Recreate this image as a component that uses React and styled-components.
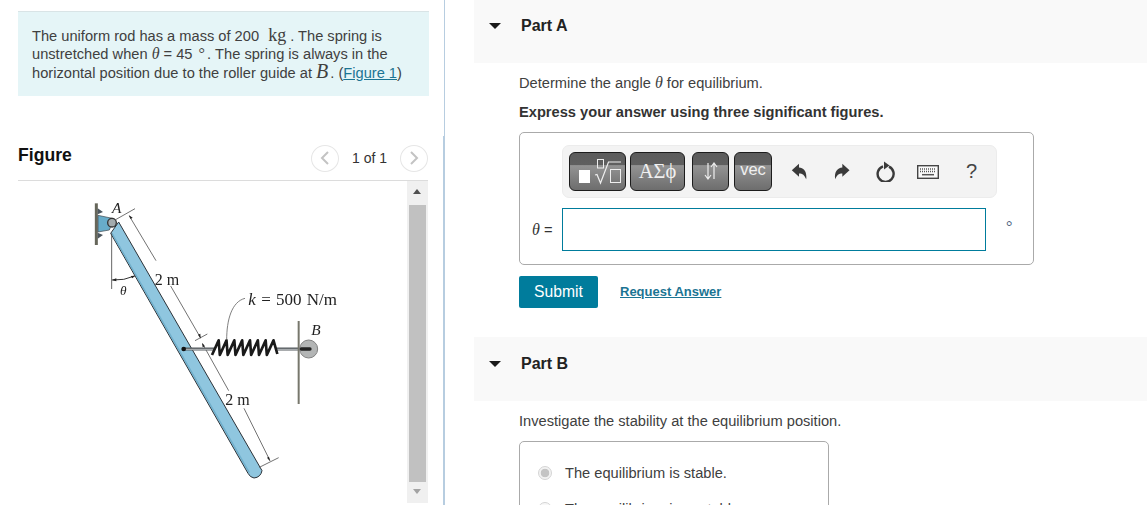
import styled, { createGlobalStyle } from 'styled-components';

const GlobalStyle = createGlobalStyle`
  html, body {
    margin: 0;
    padding: 0;
    height: 505px;
    overflow: hidden;
    background: #fff;
    font-family: "Liberation Sans", Arial, sans-serif;
    color: #333;
  }
`;

const coilPath = Array.from({ length: 8 })
  .map((_, i) => {
    const x = 402 + i * 23.5;
    return `${i === 0 ? 'M' : 'L'}${x - 6} 495L${x + 14} 451`;
  })
  .join('') + 'L592 492';

const RodFigure = () => (
  <FigureSvg viewBox="0 0 810 900">
    {/* wall bracket */}
    <path d="M49 40V165" stroke="#66665a" strokeWidth="9" />
    <path d="M53 55l16 11-16 7zM53 128l16 7-16 11z" fill="#4c565e" />
    <path d="M54 76L102 86 88 120 54 126z" fill="#68acc9" stroke="#3c444a" strokeWidth="2" />
    {/* rod */}
    <path d="M116 96L546 842Q542 862 522 864Q510 862 504 850L92 130z" fill="#8fc6df" stroke="#2c3238" strokeWidth="3" strokeLinejoin="round" />
    <path d="M96 130L508 848" stroke="#6fafcc" strokeWidth="4" />
    <circle cx="96" cy="98" r="13" fill="#a3abad" stroke="#333" strokeWidth="4" />
    {/* theta angle */}
    <path d="M95 130V297" stroke="#444" strokeWidth="2.5" fill="none" />
    <path d="M97 270Q132 272 164 258" stroke="#333" strokeWidth="3" fill="none" />
    <path d="M95 270l14-5v9zM166 257l-14 1 5 7z" fill="#222" />
    {/* dimension lines */}
    <g stroke="#555" strokeWidth="2.5" fill="none">
      <path d="M105 90L165 56" />
      <path d="M148 78L228 212M272 288L362 444" />
      <path d="M345 452L382 432" />
      <path d="M368 462L446 602M492 655L570 812" />
      <path d="M538 832L596 803" />
    </g>
    <path d="M146 75l12 8-6 4zM362 446l-8-12 7-3zM366 458l9 11-7 3zM570 814l-9-11 6-3z" fill="#222" />
    {/* spring */}
    <path d="M310 477H402M590 477H680" stroke="#555a5e" strokeWidth="9" />
    <path d="M310 478H402M590 478H680" stroke="#b8bcbe" strokeWidth="3" />
    <circle cx="311" cy="477" r="7" fill="#111" />
    <path d={coilPath} stroke="#1a1a1a" strokeWidth="8" fill="none" strokeLinejoin="round" />
    <path d="M495 325C455 335 440 390 440 450" stroke="#666" strokeWidth="2.5" fill="none" />
    {/* wall and roller at B */}
    <path d="M656 393V642" stroke="#77776c" strokeWidth="6" />
    <circle cx="686" cy="477" r="27" fill="#b3b5b5" stroke="#808080" strokeWidth="3" />
    <path d="M664 477H690" stroke="#222" strokeWidth="10" strokeLinecap="round" />
    <FigureLabel x="96" y="68" $size={46} $italic>A</FigureLabel>
    <FigureLabel x="224" y="284">2 m</FigureLabel>
    <FigureLabel x="120" y="316" $size={40} $italic>θ</FigureLabel>
    <FigureLabel x="505" y="344" $size={51} $wide><tspan fontStyle="italic">k</tspan> = 500 N/m</FigureLabel>
    <FigureLabel x="694" y="436" $size={46} $italic>B</FigureLabel>
    <FigureLabel x="436" y="644">2 m</FigureLabel>
  </FigureSvg>
);

const RootIcon = () => (
  <RootSvg width="42" height="32" viewBox="0 0 42 32" fill="none">
    <rect x="0" y="15" width="11" height="13" fill="#fff" />
    <rect x="18.5" y="4.5" width="6" height="8.5" stroke="#eee" />
    <path d="M16 20l2-.5L21.5 28 29.5 7H42" stroke="#eee" strokeWidth="1.2" />
    <rect x="31.5" y="14.5" width="10" height="13" stroke="#eee" />
  </RootSvg>
);

const ArrowsIcon = () => (
  <svg width="14" height="18" viewBox="0 0 14 18" fill="none" stroke="#eee" strokeWidth="1.2">
    <path d="M4 1V17M1 13l3 4 3-4" />
    <path d="M10 17V1M7 5l3-4 3 4" />
  </svg>
);

const UndoIcon = () => (
  <svg width="16" height="17" viewBox="33 38 48 52" fill="#3a3a3a">
    <path d="M35 60L57 40V52C72 53 82 65 79 88C74 75 68 70 57 70V80Z" />
  </svg>
);

const RedoIcon = () => (
  <svg width="16" height="17" viewBox="165 38 48 52" fill="#3a3a3a">
    <path d="M212 60L190 40V52C175 53 165 65 168 88C173 75 179 70 190 70V80Z" />
  </svg>
);

const ResetIcon = () => (
  <svg width="19" height="21" viewBox="0 0 19 21" fill="none">
    <path d="M7 5.3A8 8 0 1 0 13 5.6" stroke="#3a3a3a" strokeWidth="2.4" />
    <path d="M8 0.5L13.5 4.6 8 8.6z" fill="#3a3a3a" />
  </svg>
);

const KeyboardIcon = () => (
  <svg width="22" height="14" viewBox="0 0 22 14">
    <rect x="0.7" y="0.7" width="20.6" height="12.6" fill="#fafafa" stroke="#444" strokeWidth="1.4" />
    <path d="M3 4h16M3 6.5h16" stroke="#555" strokeWidth="1.4" strokeDasharray="1 1" />
    <path d="M5 9.7h12" stroke="#555" strokeWidth="1.5" />
  </svg>
);

const App = () => {
  return (
    <>
      <GlobalStyle />
      <Page>
        <LeftPanel>
          <Intro>
            The uniform rod has a mass of 200 <MathUnit>kg</MathUnit> . The spring is unstretched when{' '}
            <MathVar>θ</MathVar> = 45 <Degree>°</Degree>. The spring is always in the horizontal position due to
            the roller guide at <MathBig>B</MathBig>. (<FigureLink>Figure 1</FigureLink>)
          </Intro>
          <FigureHeader>
            <FigureTitle>Figure</FigureTitle>
            <Pager>
              <PagerButton>
                <svg width="10" height="14" viewBox="0 0 10 14" fill="none" stroke="#c3c3c3" strokeWidth="2"><path d="M8 1L2 7l6 6" /></svg>
              </PagerButton>
              <PagerText>1 of 1</PagerText>
              <PagerButton>
                <svg width="10" height="14" viewBox="0 0 10 14" fill="none" stroke="#c3c3c3" strokeWidth="2"><path d="M2 1l6 6-6 6" /></svg>
              </PagerButton>
            </Pager>
          </FigureHeader>
          <FigureRow>
            <FigureArea>
              <RodFigure />
            </FigureArea>
            <ScrollBar>
              <ScrollArrow $up />
              <ScrollThumb />
              <ScrollArrow />
            </ScrollBar>
          </FigureRow>
        </LeftPanel>
        <Divider />

        <RightPanel>
          <PartHeader>
            <Caret />
            <PartTitle>Part A</PartTitle>
          </PartHeader>
          <PartBody>
            <Question>Determine the angle <MathVar>θ</MathVar> for equilibrium.</Question>
            <Instruction>Express your answer using three significant figures.</Instruction>
            <AnswerBox>
              <Toolbar>
                <ToolButton $width={57} $gap={0} $icon><RootIcon /></ToolButton>
                <ToolButton $width={55} $gap={4} $serif>ΑΣϕ</ToolButton>
                <ToolButton $width={37} $gap={7} $icon><ArrowsIcon /></ToolButton>
                <ToolButton $width={38} $gap={5}>vec</ToolButton>
                <IconAction $left={19}><UndoIcon /></IconAction>
                <IconAction $left={27}><RedoIcon /></IconAction>
                <IconAction $left={26}><ResetIcon /></IconAction>
                <IconAction $left={22}><KeyboardIcon /></IconAction>
                <HelpMark>?</HelpMark>
              </Toolbar>
              <InputRow>
                <InputLabel><MathVar>θ</MathVar> =</InputLabel>
                <AnswerInput />
                <UnitMark>°</UnitMark>
              </InputRow>
            </AnswerBox>
            <Actions>
              <SubmitButton>Submit</SubmitButton>
              <RequestLink>Request Answer</RequestLink>
            </Actions>
          </PartBody>

          <PartHeader $second>
            <Caret />
            <PartTitle>Part B</PartTitle>
          </PartHeader>
          <PartBody>
            <StabilityText>Investigate the stability at the equilibrium position.</StabilityText>
            <ChoiceBox>
              <Choice>
                <Radio $checked />
                <span>The equilibrium is stable.</span>
              </Choice>
              <Choice>
                <Radio />
                <span>The equilibrium is unstable.</span>
              </Choice>
            </ChoiceBox>
          </PartBody>
        </RightPanel>
      </Page>
    </>
  );
};

export default App;

const Page = styled.div`
  display: flex;
  width: 1147px;
  height: 505px;
  overflow: hidden;
`;

const LeftPanel = styled.div`
  width: 411px;
  flex-shrink: 0;
  padding: 11px 14px 0 18px;
`;

const Divider = styled.div`
  width: 2px;
  flex-shrink: 0;
  background:
    linear-gradient(#b7cde0, #b7cde0) right top / 1px 100% no-repeat,
    linear-gradient(#b7cde0, #b7cde0) left 136px / 1px 100% no-repeat;
`;

const Intro = styled.div`
  padding: 15px 20px 0 14px;
  box-sizing: border-box;
  height: 85px;
  background: #e5f5f7;
  border-top: 1px solid #d9e4e6;
  line-height: 18.4px;
  font-size: 14.65px;
  color: #404040;
`;

const MathUnit = styled.span`
  font-family: "Liberation Serif", serif;
  font-size: 18px;
  line-height: 0;
  margin-left: 5px;
`;

const MathVar = styled.span`
  font-family: "Liberation Serif", serif;
  font-style: italic;
  font-size: 16px;
  line-height: 0;
`;

const MathBig = styled.span`
  font-family: "Liberation Serif", serif;
  font-style: italic;
  font-size: 20px;
  line-height: 0;
  margin-right: 2px;
`;

const Degree = styled.span`
  font-family: "Liberation Serif", serif;
  font-size: 16px;
  line-height: 0;
  margin: 0 2px 0 2px;
`;

const FigureLink = styled.span`
  color: #1b7493;
  text-decoration: underline;
`;

const FigureHeader = styled.div`
  display: flex;
  align-items: center;
  justify-content: space-between;
  height: 35px;
  margin: 49px 1px 0 0;
  border-bottom: 1px solid #dcdcdc;
`;

const FigureTitle = styled.div`
  font-size: 17.6px;
  font-weight: 700;
  color: #111;
  margin-top: -15px;
`;

const Pager = styled.div`
  display: flex;
  align-items: center;
  gap: 13px;
  margin-top: -9px;
`;

const PagerButton = styled.div`
  display: flex;
  align-items: center;
  justify-content: center;
  width: 28px;
  height: 27px;
  border: 1px solid #e6e6e6;
  border-radius: 50%;
  box-sizing: border-box;
  background: #fff;
`;

const PagerText = styled.div`
  font-size: 14px;
  color: #333;
`;

const FigureRow = styled.div`
  display: flex;
  height: 322px;
  margin-right: 1px;
`;

const FigureArea = styled.div`
  flex: 1;
  padding: 9px 0 0 62px;
`;

const FigureSvg = styled.svg`
  display: block;
  width: 270px;
  height: 300px;
  filter: blur(0.45px);
`;

const FigureLabel = styled.text`
  font-family: "Liberation Serif", serif;
  font-size: ${(p) => p.$size || 48}px;
  font-style: ${(p) => (p.$italic ? 'italic' : 'normal')};
  word-spacing: ${(p) => (p.$wide ? 3 : 0)}px;
  fill: #222;
`;

const ScrollBar = styled.div`
  display: flex;
  flex-direction: column;
  width: 21px;
  background: #f0f0f0;
`;

const ScrollArrow = styled.div`
  position: relative;
  height: ${(p) => (p.$up ? 24 : 21)}px;
  flex-shrink: 0;

  &::after {
    content: '';
    position: absolute;
    left: 6px;
    top: ${(p) => (p.$up ? 8 : 7)}px;
    border-left: 4.5px solid transparent;
    border-right: 4.5px solid transparent;
    ${(p) => (p.$up ? 'border-bottom: 5px solid #505050;' : 'border-top: 5px solid #a3a3a3;')}
  }
`;

const ScrollThumb = styled.div`
  flex: 1;
  margin: 0 2px;
  background: #c1c1c1;
`;

const RightPanel = styled.div`
  flex: 1;
  margin-left: 29px;
  min-width: 0;
  font-size: 14.65px;
`;

const PartHeader = styled.div`
  display: flex;
  align-items: flex-start;
  height: ${(p) => (p.$second ? 64 : 63)}px;
  margin-top: ${(p) => (p.$second ? 29 : 0)}px;
  padding: ${(p) => (p.$second ? 18 : 17)}px 0 0 15px;
  box-sizing: border-box;
  background: #f9f9f9;
`;

const Caret = styled.div`
  width: 0;
  height: 0;
  margin-top: 6px;
  border-left: 6px solid transparent;
  border-right: 6px solid transparent;
  border-top: 6px solid #1a1a1a;
`;

const PartTitle = styled.div`
  margin-left: 20px;
  font-size: 16px;
  line-height: 18px;
  font-weight: 700;
  color: #222;
`;

const PartBody = styled.div`
  padding-left: 45px;
`;

const Question = styled.div`
  margin-top: 11px;
  line-height: 18px;
  color: #404040;
`;

const Instruction = styled.div`
  margin-top: 11px;
  line-height: 18px;
  font-weight: 700;
  color: #333;
`;

const AnswerBox = styled.div`
  width: 515px;
  height: 133px;
  margin-top: 11px;
  box-sizing: border-box;
  border: 1px solid #aaa;
  border-radius: 5px;
  padding: 12px 0 0 42px;
`;

const Toolbar = styled.div`
  display: flex;
  align-items: center;
  width: 435px;
  height: 53px;
  box-sizing: border-box;
  padding-left: 6px;
  background: #f3f3f3;
  border: 1px solid #ececec;
  border-radius: 7px;
`;

const ToolButton = styled.div`
  display: flex;
  align-items: center;
  justify-content: center;
  width: ${(p) => p.$width}px;
  height: 39px;
  margin-left: ${(p) => p.$gap}px;
  margin-top: -1px;
  flex-shrink: 0;
  box-sizing: border-box;
  border: 1.5px solid #1c1c1c;
  border-radius: 6px;
  background: linear-gradient(#5c5c5c 0, #5f5f5f 32%, #939393 34%, #6d6d6d 100%);
  color: #f0f0f0;
  font-size: ${(p) => (p.$serif ? 20.5 : 16.5)}px;
  font-family: ${(p) => (p.$serif ? '"Liberation Serif", serif' : '"Liberation Sans", sans-serif')};
  padding-bottom: ${(p) => (p.$serif || p.$icon ? 0 : 3)}px;
`;

const RootSvg = styled.svg`
  margin-left: 5px;
  flex-shrink: 0;
`;

const IconAction = styled.div`
  display: flex;
  align-items: center;
  flex-shrink: 0;
  margin-left: ${(p) => p.$left}px;
`;

const HelpMark = styled.div`
  margin-left: 27px;
  font-size: 20px;
  color: #444;
`;

const InputRow = styled.div`
  display: flex;
  align-items: center;
  margin-top: 10px;
  margin-left: -30px;
`;

const InputLabel = styled.div`
  width: 30px;
  flex-shrink: 0;
  font-size: 14.65px;
  color: #333;
  padding-top: 1px;
`;

const AnswerInput = styled.div`
  width: 424px;
  height: 43px;
  flex-shrink: 0;
  box-sizing: border-box;
  border: 1px solid #007c9c;
`;

const UnitMark = styled.div`
  margin-left: 20px;
  margin-top: -6px;
  font-family: "Liberation Serif", serif;
  font-size: 16px;
  color: #4a5a7a;
`;

const Actions = styled.div`
  display: flex;
  align-items: center;
  gap: 22px;
  margin-top: 11px;
`;

const SubmitButton = styled.div`
  width: 79px;
  height: 32px;
  display: flex;
  align-items: center;
  justify-content: center;
  background: #007c9c;
  border-radius: 2px;
  color: #fff;
  font-size: 15.7px;
`;

const RequestLink = styled.div`
  font-size: 13px;
  font-weight: 700;
  color: #1b7493;
  text-decoration: underline;
  margin-top: -2px;
`;

const StabilityText = styled.div`
  margin-top: 11px;
  line-height: 18px;
  color: #404040;
`;

const ChoiceBox = styled.div`
  width: 310px;
  height: 120px;
  margin-top: 11px;
  box-sizing: border-box;
  border: 1px solid #aaa;
  border-radius: 5px;
  padding-top: 21px;
`;

const Choice = styled.div`
  display: flex;
  align-items: center;
  gap: 13px;
  height: 20px;
  margin-bottom: 16px;
  padding-left: 18px;
  color: #404040;
`;

const Radio = styled.div`
  width: 14px;
  height: 14px;
  box-sizing: border-box;
  border: 1px solid #d4d4d4;
  border-radius: 50%;
  background: ${(p) => (p.$checked ? 'radial-gradient(circle, #c4c4c4 0 4px, #f2f2f2 4.6px)' : '#f8f8f8')};
`;
